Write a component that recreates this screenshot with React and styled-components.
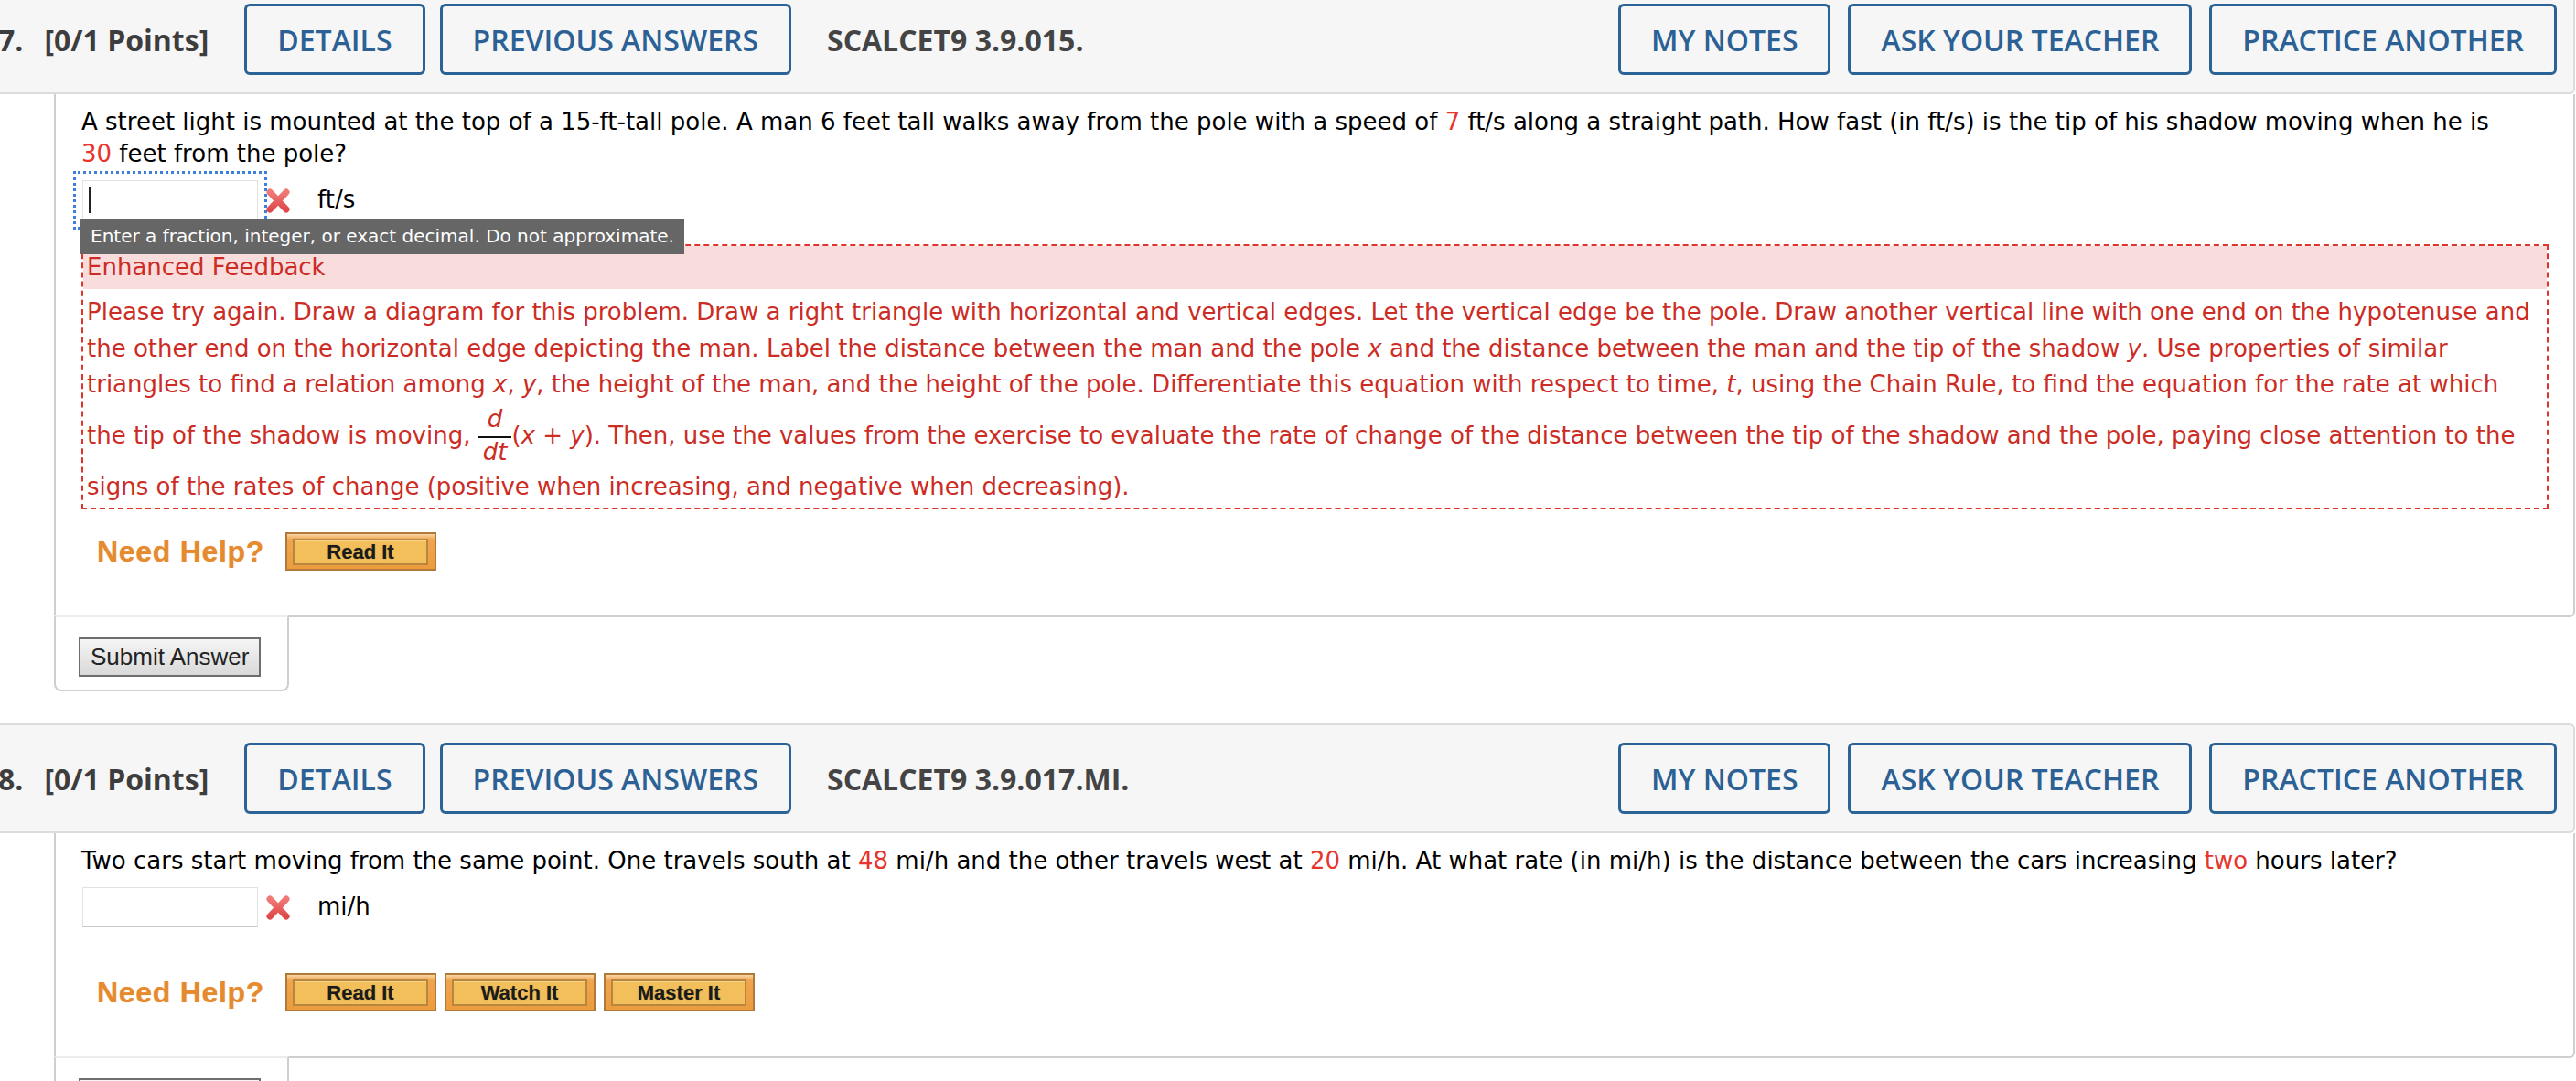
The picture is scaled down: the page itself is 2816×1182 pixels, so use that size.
import styled, { createGlobalStyle } from "styled-components";

const bodyFont = `Verdana, "DejaVu Sans", sans-serif`;
const headFont = `"Open Sans", "Noto Sans", sans-serif`;
const arialFont = `Arial, "Liberation Sans", Helvetica, sans-serif`;

const GlobalStyle = createGlobalStyle`
  html, body {
    margin: 0;
    padding: 0;
    background: #ffffff;
    overflow: hidden;
  }
  body {
    font-family: ${bodyFont};
    color: #000;
  }
`;

const Page = styled.div`
  width: 2815px;
`;

const Question = styled.section`
  margin-top: ${(p) => (p.$first ? "-17px" : "35px")};
`;

const Header = styled.div`
  display: flex;
  align-items: center;
  box-sizing: border-box;
  height: 120px;
  padding: 0 18px 0 0;
  background: #f6f6f6;
  border: 2px solid #dcdcdc;
  border-left: none;
  border-radius: 0 6px 6px 0;
`;

const Title = styled.div`
  display: flex;
  margin-left: -2px;
  margin-right: 39px;
  font: 700 32px ${headFont};
  color: #3d3d3d;
  white-space: nowrap;
`;

const Num = styled.span`
  margin-right: 23px;
`;

const ButtonGroup = styled.div`
  display: flex;
  gap: ${(p) => p.$gap || 16}px;
  margin-left: ${(p) => (p.$right ? "auto" : "0")};
`;

const HeaderButton = styled.button`
  height: 78px;
  box-sizing: border-box;
  padding: 0 33px;
  border: 3px solid #2c6396;
  border-radius: 6px;
  background: transparent;
  font: 600 32px ${headFont};
  color: #2c6195;
  white-space: nowrap;
  cursor: pointer;
`;

const Code = styled.div`
  margin-left: 39px;
  font: 700 32px ${headFont};
  color: #444;
  white-space: nowrap;
`;

const Body = styled.div`
  margin-left: 59px;
  padding: 13px 27px 49px 28px;
  border: 2px solid #cfcfcf;
  border-top: none;
  border-radius: 0 0 6px 0;
`;

const Prompt = styled.div`
  font-size: 26px;
  line-height: 35px;
  color: #000;
`;

const Red = styled.span`
  color: #e8342b;
`;

const AnswerRow = styled.div`
  position: relative;
  display: flex;
  align-items: center;
  height: 44px;
  margin-top: 11px;
`;

const AnswerField = styled.div`
  display: flex;
  align-items: center;
  width: 192px;
  height: 44px;
  box-sizing: border-box;
  margin-left: 1px;
  padding-left: 6px;
  border: 1px solid #e2e2e2;
  border-bottom-color: #c9c9c9;
  background: #fff;
  outline: ${(p) => (p.$focused ? "3px dotted #3d7fdc" : "none")};
  outline-offset: 7px;
`;

const Caret = styled.span`
  width: 2px;
  height: 28px;
  background: #222;
`;

const WrongMark = styled.svg`
  width: 28px;
  height: 27px;
  margin-left: 8px;
`;

const Unit = styled.span`
  margin-left: 29px;
  font-size: 26px;
  color: #000;
  transform: translateY(-1px);
`;

const Tooltip = styled.div`
  position: absolute;
  left: -1px;
  top: 42px;
  z-index: 2;
  height: 39px;
  padding: 0 11px;
  background: #666;
  color: #fff;
  font-size: 20px;
  line-height: 39px;
  white-space: nowrap;
`;

const Feedback = styled.div`
  margin-top: 26px;
  border: 2px dashed #e0332b;
  color: #cc2c24;
  font-size: 26px;
`;

const FeedbackHead = styled.div`
  height: 47px;
  padding-left: 4px;
  background: #f9dcdc;
  line-height: 47px;
`;

const FeedbackText = styled.div`
  padding: 6px 4px 3px 4px;
  line-height: 39.5px;
`;

const Var = styled.i`
  font-style: italic;
`;

const Frac = styled.span`
  display: inline-block;
  vertical-align: -18px;
  padding: 2px 0 4px;
  text-align: center;
  font-style: italic;
`;

const FracNum = styled.span`
  display: block;
  margin-bottom: 4px;
  line-height: 30px;
`;

const FracDen = styled.span`
  display: block;
  padding: 0 5px;
  border-top: 2px solid #111;
  line-height: 30px;
`;

const HelpRow = styled.div`
  display: flex;
  align-items: center;
  gap: 9px;
  margin-top: ${(p) => p.$gap}px;
`;

const HelpLabel = styled.span`
  margin-left: 17px;
  margin-right: 14px;
  font: 700 32px ${arialFont};
  letter-spacing: 0.7px;
  color: #e68a30;
  text-shadow: 0 0 1px rgba(230, 138, 48, 0.6);
`;

const HelpButton = styled.button`
  width: 165px;
  height: 42px;
  box-sizing: border-box;
  padding: 5px 7px 4px 6px;
  border: 2px solid #b27a3a;
  background: linear-gradient(#f9d6a4 0, #efa54f 6px, #ec9c3d 100%);
  cursor: pointer;
`;

const HelpInner = styled.span`
  display: block;
  height: 100%;
  box-sizing: border-box;
  border: 2px solid #b98640;
  background: #f2bf5a;
  box-shadow: inset 0 1px 0 #f7d58e;
  font: 700 22px ${arialFont};
  line-height: 25px;
  color: #1b1b1b;
  text-shadow: 0 0 1px rgba(0, 0, 0, 0.4);
`;

const SubmitTab = styled.div`
  width: 257px;
  box-sizing: border-box;
  margin-left: 59px;
  margin-top: -2px;
  padding: 22px 25px 14px;
  border: 2px solid #cfcfcf;
  border-top-color: #ececec;
  border-radius: 0 0 8px 8px;
`;

const SubmitButton = styled.button`
  height: 43px;
  box-sizing: border-box;
  padding: 0 11px;
  border: 2px solid #6e6e6e;
  background: linear-gradient(#f5f5f5, #d9d9d9);
  font: 26px ${arialFont};
  color: #222;
  cursor: pointer;
`;

const Cross = () => (
  <WrongMark viewBox="0 0 28 27">
    <defs>
      <linearGradient id="xg" x1="0" y1="0" x2="0" y2="1">
        <stop offset="0" stopColor="#ef7a78" />
        <stop offset="1" stopColor="#e0494b" />
      </linearGradient>
    </defs>
    <path
      d="M5 4 L23 23 M23 4 L5 23"
      stroke="url(#xg)"
      strokeWidth="7"
      strokeLinecap="round"
      fill="none"
    />
  </WrongMark>
);

const QuestionHeader = ({ num, code }) => (
  <Header>
    <Title>
      <Num>{num}.</Num>
      <span>[0/1 Points]</span>
    </Title>
    <ButtonGroup>
      <HeaderButton>DETAILS</HeaderButton>
      <HeaderButton>PREVIOUS ANSWERS</HeaderButton>
    </ButtonGroup>
    <Code>{code}</Code>
    <ButtonGroup $right $gap={19}>
      <HeaderButton>MY NOTES</HeaderButton>
      <HeaderButton>ASK YOUR TEACHER</HeaderButton>
      <HeaderButton>PRACTICE ANOTHER</HeaderButton>
    </ButtonGroup>
  </Header>
);

const NeedHelp = ({ gap, items }) => (
  <HelpRow $gap={gap}>
    <HelpLabel>Need Help?</HelpLabel>
    {items.map((label) => (
      <HelpButton key={label}>
        <HelpInner>{label}</HelpInner>
      </HelpButton>
    ))}
  </HelpRow>
);

const Submit = () => (
  <SubmitTab>
    <SubmitButton>Submit Answer</SubmitButton>
  </SubmitTab>
);

export default function App() {
  return (
    <Page>
      <GlobalStyle />

      <Question $first>
        <QuestionHeader num={7} code="SCALCET9 3.9.015." />
        <Body>
          <Prompt>
            A street light is mounted at the top of a 15-ft-tall pole. A man 6 feet tall walks
            away from the pole with a speed of <Red>7</Red> ft/s along a straight path. How fast
            (in ft/s) is the tip of his shadow moving when he is
            <br />
            <Red>30</Red> feet from the pole?
          </Prompt>
          <AnswerRow>
            <AnswerField $focused>
              <Caret />
            </AnswerField>
            <Cross />
            <Unit>ft/s</Unit>
            <Tooltip>Enter a fraction, integer, or exact decimal. Do not approximate.</Tooltip>
          </AnswerRow>
          <Feedback>
            <FeedbackHead>Enhanced Feedback</FeedbackHead>
            <FeedbackText>
              Please try again. Draw a diagram for this problem. Draw a right triangle with
              horizontal and vertical edges. Let the vertical edge be the pole. Draw another
              vertical line with one end on the hypotenuse and the other end on the horizontal
              edge depicting the man. Label the distance between the man and the pole{" "}
              <Var>x</Var> and the distance between the man and the tip of the shadow{" "}
              <Var>y</Var>. Use properties of similar triangles to find a relation among{" "}
              <Var>x</Var>, <Var>y</Var>, the height of the man, and the height of the pole.
              Differentiate this equation with respect to time, <Var>t</Var>, using the Chain
              Rule, to find the equation for the rate at which the tip of the shadow is moving,{" "}
              <Frac>
                <FracNum>d</FracNum>
                <FracDen>dt</FracDen>
              </Frac>
              (<Var>x</Var> + <Var>y</Var>). Then, use the values from the exercise to evaluate
              the rate of change of the distance between the tip of the shadow and the pole,
              paying close attention to the signs of the rates of change (positive when
              increasing, and negative when decreasing).
            </FeedbackText>
          </Feedback>
          <NeedHelp gap={25} items={["Read It"]} />
        </Body>
        <Submit />
      </Question>

      <Question>
        <QuestionHeader num={8} code="SCALCET9 3.9.017.MI." />
        <Body>
          <Prompt>
            Two cars start moving from the same point. One travels south at <Red>48</Red> mi/h
            and the other travels west at <Red>20</Red> mi/h. At what rate (in mi/h) is the
            distance between the cars increasing <Red>two</Red> hours later?
          </Prompt>
          <AnswerRow>
            <AnswerField />
            <Cross />
            <Unit>mi/h</Unit>
          </AnswerRow>
          <NeedHelp gap={50} items={["Read It", "Watch It", "Master It"]} />
        </Body>
        <Submit />
      </Question>
    </Page>
  );
}
